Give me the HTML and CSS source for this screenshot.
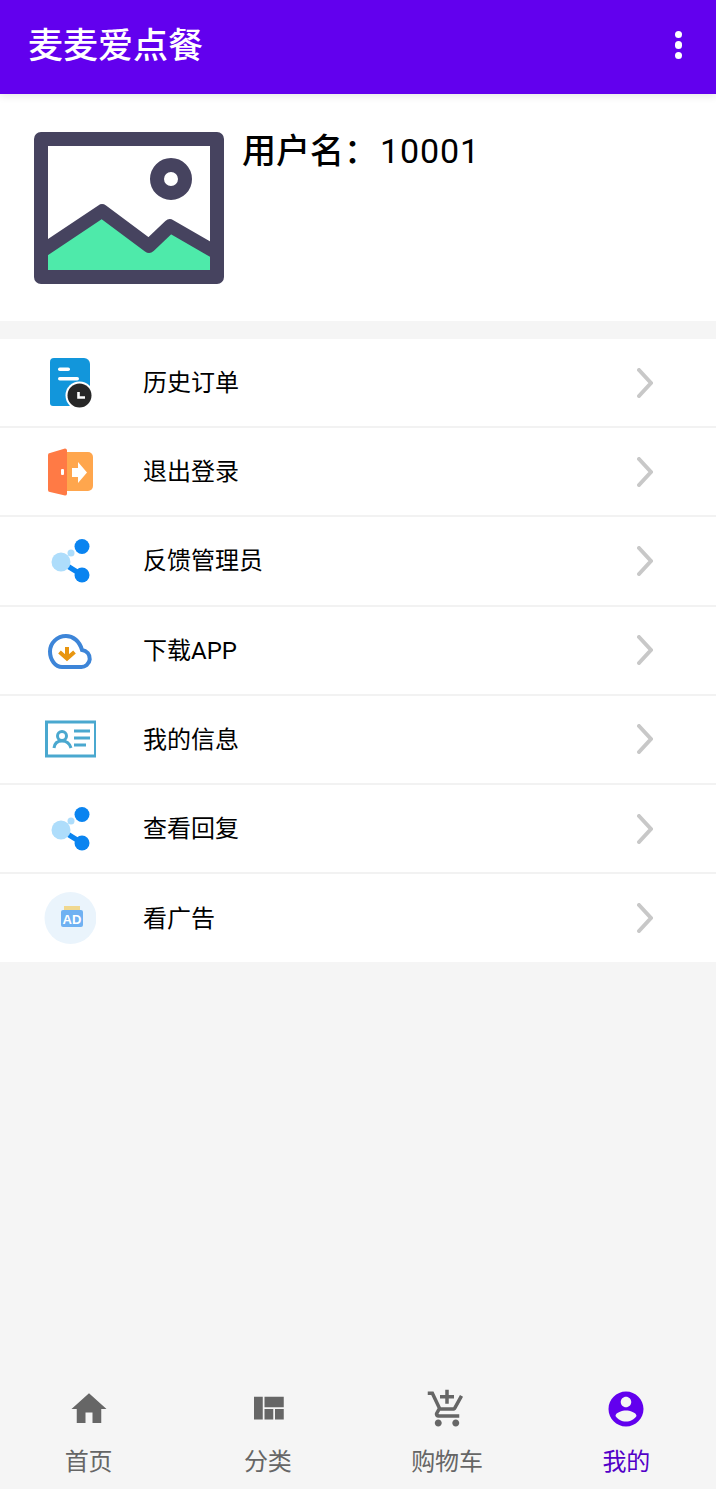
FILE: index.html
```html
<!DOCTYPE html>
<html lang="zh-CN">
<head>
  <meta charset="UTF-8">
  <title>麦麦爱点餐</title>
  <link rel="stylesheet" href="styles.css">
</head>
<body>

<div class="page">
  <header class="app-bar">
    <h1>麦麦爱点餐</h1>
    <div class="more"><span></span><span></span><span></span></div>
  </header>

  <section class="profile">
    <svg class="avatar" viewBox="0 0 190 152">
      <rect x="10" y="10" width="170" height="132" fill="#fff"/>
      <circle cx="137" cy="47" r="14" fill="#fff" stroke="#46435f" stroke-width="14"/>
      <path d="M14 115L68 79L115 114L136 94L176 117V138H14Z" fill="#4eeaaa"/>
      <path d="M8 119L68 79L115 114L136 94L182 120.500" fill="none" stroke="#46435f" stroke-width="13.500" stroke-linejoin="round"/>
      <path fill-rule="evenodd" d="M7 0H183A7 7 0 0 1 190 7V145A7 7 0 0 1 183 152H7A7 7 0 0 1 0 145V7A7 7 0 0 1 7 0ZM14 14V138H176V14Z" fill="#46435f"/>
    </svg>
    <div class="username">用户名：<span class="digits">10001</span></div>
  </section>

  <ul class="menu">
    <li class="menu-row">
      <svg class="menu-icon" viewBox="0 0 52 52">
        <path d="M10 1H40A6 6 0 0 1 46 7V46A3 3 0 0 1 43 49H9A3 3 0 0 1 6 46V5A4 4 0 0 1 10 1Z" fill="#1296db"/>
        <rect x="14" y="10.500" width="12" height="3.500" rx="1.750" fill="#fff"/>
        <rect x="14" y="20" width="21" height="3.500" rx="1.750" fill="#fff"/>
        <circle cx="35.500" cy="38.500" r="14" fill="#fff"/>
        <circle cx="35.500" cy="38.500" r="12" fill="#272727"/>
        <path d="M34.500 35V40.500H41" fill="none" stroke="#fff" stroke-width="2.600"/>
      </svg>
      <span class="menu-text">历史订单</span>
      <svg class="chevron" viewBox="0 0 16 30"><path d="M2 2L14 15L2 28" /></svg>
    </li>
    <li class="menu-row">
      <svg class="menu-icon" viewBox="0 0 52 52">
        <path d="M23 6H44A5 5 0 0 1 49 11V40A5 5 0 0 1 44 45H23Z" fill="#ffa64d"/>
        <path d="M6 7L21 2.500A2 2 0 0 1 23 4V48A2 2 0 0 1 21 49.500L6 46A2 2 0 0 1 4 44V9A2 2 0 0 1 6 7Z" fill="#ff7a45"/>
        <rect x="17" y="23" width="3" height="6" rx="1" fill="#fff"/>
        <path d="M28 22H34V16L43 26.500L34 37V31H28Z" fill="#fff"/>
      </svg>
      <span class="menu-text">退出登录</span>
      <svg class="chevron" viewBox="0 0 16 30"><path d="M2 2L14 15L2 28" /></svg>
    </li>
    <li class="menu-row">
      <svg class="menu-icon" viewBox="0 0 52 52">
        <path d="M17 27L38 40" stroke="#0a84f0" stroke-width="5"/>
        <circle cx="17" cy="27" r="9.500" fill="#aeddfb"/>
        <circle cx="27" cy="18" r="3.500" fill="#aeddfb"/>
        <circle cx="38" cy="11.500" r="7.500" fill="#0a84f0"/>
        <circle cx="38" cy="40" r="7.500" fill="#0a84f0"/>
      </svg>
      <span class="menu-text">反馈管理员</span>
      <svg class="chevron" viewBox="0 0 16 30"><path d="M2 2L14 15L2 28" /></svg>
    </li>
    <li class="menu-row">
      <svg class="menu-icon" viewBox="0 0 52 52">
        <path d="M18 43H36.500A8.500 8.500 0 0 0 38 26C35.500 17 29 12 22 12C13 12 6 19 6 27.500C6 36 11.500 43 18 43Z" fill="none" stroke="#3d85d8" stroke-width="4"/>
        <path d="M23 23V34M15.500 28L23 34.500L30.500 28" fill="none" stroke="#e8950f" stroke-width="4"/>
      </svg>
      <span class="menu-text">下载APP</span>
      <svg class="chevron" viewBox="0 0 16 30"><path d="M2 2L14 15L2 28" /></svg>
    </li>
    <li class="menu-row">
      <svg class="menu-icon" viewBox="0 0 52 52">
        <rect x="2.500" y="9" width="49" height="34" fill="none" stroke="#4aa8cf" stroke-width="3"/>
        <circle cx="18" cy="23" r="4.500" fill="none" stroke="#4aa8cf" stroke-width="3"/>
        <path d="M10 35C10.500 30 14 28 18 28C22 28 25.500 30 27 35" fill="none" stroke="#4aa8cf" stroke-width="3"/>
        <path d="M30 18H46M30 25H46M30 32H42" stroke="#4aa8cf" stroke-width="3"/>
      </svg>
      <span class="menu-text">我的信息</span>
      <svg class="chevron" viewBox="0 0 16 30"><path d="M2 2L14 15L2 28" /></svg>
    </li>
    <li class="menu-row">
      <svg class="menu-icon" viewBox="0 0 52 52">
        <path d="M17 27L38 40" stroke="#0a84f0" stroke-width="5"/>
        <circle cx="17" cy="27" r="9.500" fill="#aeddfb"/>
        <circle cx="27" cy="18" r="3.500" fill="#aeddfb"/>
        <circle cx="38" cy="11.500" r="7.500" fill="#0a84f0"/>
        <circle cx="38" cy="40" r="7.500" fill="#0a84f0"/>
      </svg>
      <span class="menu-text">查看回复</span>
      <svg class="chevron" viewBox="0 0 16 30"><path d="M2 2L14 15L2 28" /></svg>
    </li>
    <li class="menu-row">
      <svg class="menu-icon" viewBox="0 0 52 52">
        <circle cx="26.500" cy="26" r="26" fill="#eaf4fc"/>
        <rect x="20" y="14" width="16" height="5" fill="#f0d890"/>
        <rect x="17" y="18" width="22" height="17" rx="2" fill="#6fb1f2"/>
        <text x="28" y="31.500" class="ad-text">AD</text>
      </svg>
      <span class="menu-text">看广告</span>
      <svg class="chevron" viewBox="0 0 16 30"><path d="M2 2L14 15L2 28" /></svg>
    </li>
  </ul>

  <nav class="bottom-nav">
    <div class="nav-item">
      <svg viewBox="0 0 24 24"><path d="M10 20v-6h4v6h5v-8h3L12 3 2 12h3v8z"/></svg>
      <span>首页</span>
    </div>
    <div class="nav-item">
      <svg viewBox="0 0 24 24"><path d="M10 18h5v-6h-5v6zm-6 0h5V5H4v13zm12 0h5v-6h-5v6zM10 5v6h11V5H10z"/></svg>
      <span>分类</span>
    </div>
    <div class="nav-item">
      <svg viewBox="0 0 24 24"><path d="M11 9h2V6h3V4h-3V1h-2v3H8v2h3v3zm-4 9c-1.100 0-1.990.9-1.990 2S5.900 22 7 22s2-.9 2-2-.9-2-2-2zm10 0c-1.100 0-1.990.9-1.990 2s.89 2 1.990 2 2-.9 2-2-.9-2-2-2zm-9.830-3.250l.03-.12.9-1.630h7.450c.75 0 1.410-.41 1.750-1.030l3.860-7.010L19.420 4h-.01l-1.100 2-2.760 5H8.530l-.13-.27L6.160 6l-.95-2-.94-2H1v2h2l3.600 7.590-1.350 2.450c-.16.28-.25.61-.25.96 0 1.100.9 2 2 2h12v-2H7.420c-.13 0-.25-.11-.25-.25z"/></svg>
      <span>购物车</span>
    </div>
    <div class="nav-item active">
      <svg viewBox="0 0 24 24"><path d="M12 2C6.480 2 2 6.480 2 12s4.480 10 10 10 10-4.480 10-10S17.520 2 12 2zm0 3c1.660 0 3 1.340 3 3s-1.340 3-3 3-3-1.340-3-3 1.340-3 3-3zm0 14.200c-2.500 0-4.710-1.280-6-3.220.03-1.990 4-3.080 6-3.080 1.990 0 5.970 1.090 6 3.080-1.290 1.940-3.500 3.220-6 3.220z"/></svg>
      <span>我的</span>
    </div>
  </nav>
</div>

</body>
</html>
```

FILE: styles.css
```css
body {
  margin: 0;
  font-family: Roboto, "Noto Sans CJK SC", "Noto Sans", sans-serif;
  background: #f5f5f5;
}

.page {
  display: flex;
  flex-direction: column;
  height: 1489px;
  overflow: hidden;
}

.app-bar {
  display: flex;
  align-items: center;
  justify-content: space-between;
  height: 94px;
  padding: 0 28px 4px;
  box-sizing: border-box;
  background: #6200ee;
  box-shadow: 0 2px 8px rgba(0,0,0,0.1);
  position: relative;
  color: white;
}

.app-bar h1 {
  margin: 0 0 6px;
  font-size: 35px;
  font-weight: 500;
}

.more {
  display: flex;
  flex-direction: column;
  gap: 3px;
  margin-right: 6px;
}

.more span {
  width: 7.500px;
  height: 7.500px;
  border-radius: 50%;
  background: white;
}

.profile {
  display: flex;
  align-items: flex-start;
  gap: 18px;
  height: 227px;
  padding: 38px 34px 0;
  box-sizing: border-box;
  background: white;
}

.avatar {
  width: 190px;
  height: 152px;
}

.username {
  font-size: 34px;
  font-weight: 500;
  line-height: 38px;
  color: #000;
}

.digits {
  margin-left: 2px;
  font-weight: 400;
  letter-spacing: 0.900px;
}

.menu {
  list-style: none;
  margin: 18px 0 0;
  padding: 0;
  background: white;
}

.menu-row {
  display: flex;
  align-items: center;
  height: 89.200px;
  padding: 0 63px 0 44px;
  box-sizing: border-box;
  border-bottom: 2px solid #f2f2f2;
}

.menu-row:last-child {
  height: 88px;
  border-bottom: none;
}

.menu-icon {
  width: 52px;
  height: 52px;
  flex-shrink: 0;
}

.menu-text {
  flex: 1;
  margin-left: 47px;
  padding-bottom: 4px;
  font-size: 24px;
  color: #000;
}

.chevron {
  width: 16px;
  height: 30px;
}

.chevron path {
  fill: none;
  stroke: #c8c8c8;
  stroke-width: 4;
  stroke-linecap: round;
}

.ad-text {
  font-family: "Liberation Sans", sans-serif;
  font-size: 13px;
  font-weight: bold;
  fill: white;
  text-anchor: middle;
}

.bottom-nav {
  display: grid;
  grid-template-columns: repeat(4, 1fr);
  margin: auto 0 0 -1px;
  height: 101px;
}

.nav-item {
  display: flex;
  flex-direction: column;
  align-items: center;
  color: #666;
  font-size: 24px;
}

.nav-item svg {
  width: 42px;
  height: 42px;
  fill: #666;
}

.nav-item span {
  margin-top: 15px;
  line-height: 35px;
}

.nav-item.active {
  color: #5200c8;
}

.nav-item.active svg {
  fill: #6200ee;
}
```
